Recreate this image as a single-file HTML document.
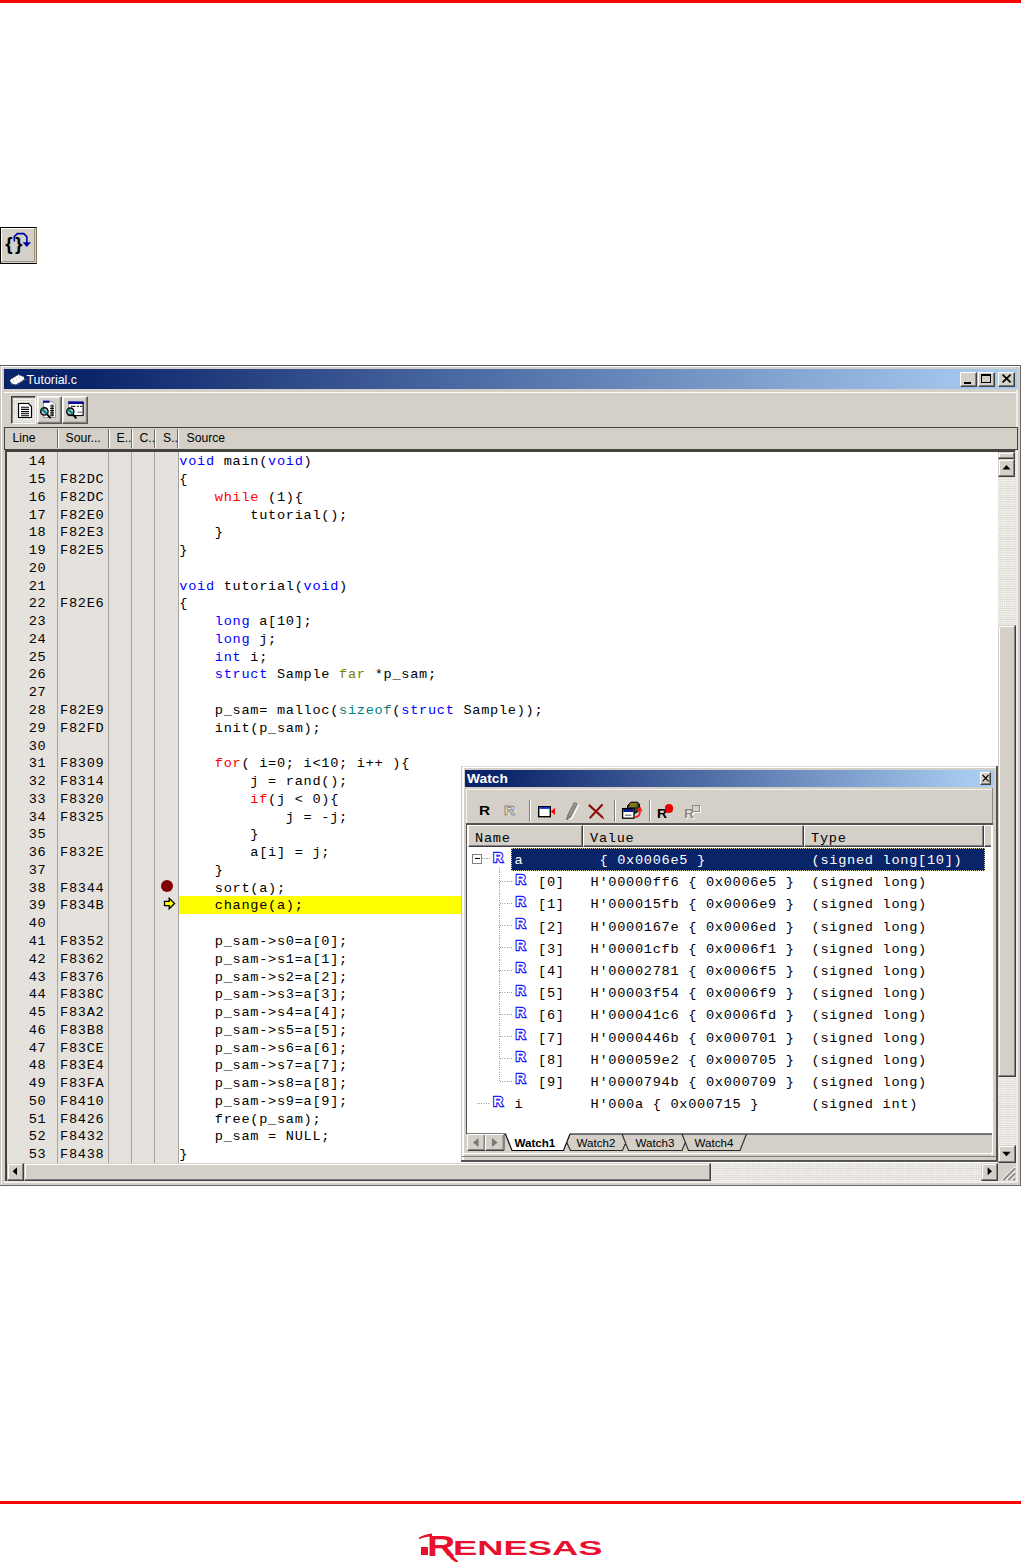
<!DOCTYPE html><html><head><meta charset="utf-8"><title>Tutorial</title><style>
*{box-sizing:border-box}
html,body{margin:0;padding:0}
body{width:1021px;height:1562px;position:relative;background:#fff;overflow:hidden;font-family:"Liberation Sans",sans-serif}
.a{position:absolute}
.mono{font-family:"Liberation Mono",monospace;font-size:13.6px;letter-spacing:0.72px;line-height:17.77px;white-space:pre;color:#000}
.ui{font-family:"Liberation Sans",sans-serif;font-size:12px;color:#000;white-space:pre}
.k{color:#0000ff} .r{color:#ff0000} .t{color:#008080} .o{color:#808000}
.raised{background:#d4d0c8;border:1px solid;border-color:#ffffff #404040 #404040 #ffffff;box-shadow:inset -1px -1px 0 #808080}
.btn{background:#d4d0c8;border:1px solid;border-color:#ffffff #404040 #404040 #ffffff;box-shadow:inset -1px -1px 0 #808080, inset 1px 1px 0 #d4d0c8}
.btn2{background:#d4d0c8;border:1.4px solid;border-color:#ffffff #5a5854 #5a5854 #ffffff;box-shadow:inset -1.2px -1.2px 0 #808080, inset 1px 1px 0 #f4f2ee}
.sbtn{background:#d4d0c8;border:1px solid;border-color:#d4d0c8 #404040 #404040 #d4d0c8;box-shadow:inset -1px -1px 0 #808080, inset 1px 1px 0 #fff}
.track{background:repeating-conic-gradient(#f8f7f5 0 25%,#dcd9d3 0 50%) 0 0/2.22px 2.22px}
</style></head><body>
<div class="a" style="left:0;top:0;width:1021px;height:3px;background:#ff0000"></div>
<div class="a" style="left:0;top:1501px;width:1021px;height:3px;background:#ff0000"></div>
<div class="a" style="left:0;top:227px;width:37px;height:37px;background:#d4d0c8;border:1px solid #000;border-right-color:#857b62;border-left-width:1px">
<div class="a" style="left:0;top:0;width:34px;height:34px;border-top:1px solid #fff;border-left:1px solid #fff;border-right:1px solid #9a927f;border-bottom:1px solid #9a927f"></div>
<svg class="a" style="left:0;top:0" width="36" height="36" viewBox="0 0 36 36">
<text x="4.3" y="22.3" font-family="Liberation Sans, sans-serif" font-weight="bold" font-size="19" fill="#000">{</text>
<text x="14.1" y="22.3" font-family="Liberation Sans, sans-serif" font-weight="bold" font-size="19" fill="#000">}</text>
<path d="M13.3 13.5 V8.6 L16.3 5.6 H22.8 L25.8 8.6 V15" fill="none" stroke="#00009c" stroke-width="1.6"/>
<path d="M21.6 14.3 H30 L25.8 19 Z" fill="#00009c"/>
</svg></div>
<div class="a" style="left:0;top:365px;width:1021px;height:821px;background:#d4d0c8"></div>
<div class="a" style="left:0;top:365px;width:1021px;height:1px;background:#5c5a56"></div>
<div class="a" style="left:0;top:366px;width:1px;height:820px;background:#c6c3bc"></div>
<div class="a" style="left:1px;top:366px;width:1019px;height:1.4px;background:#fff"></div>
<div class="a" style="left:1px;top:366px;width:1.2px;height:819px;background:#fff"></div>
<div class="a" style="left:4px;top:1181px;width:1014px;height:2.4px;background:#efede9"></div>
<div class="a" style="left:1015.5px;top:390px;width:2.5px;height:793.4px;background:#efede9"></div>
<div class="a" style="left:0;top:1185.3px;width:1021px;height:1px;background:#6a6864"></div>
<div class="a" style="left:1020px;top:365px;width:1px;height:821.3px;background:#6e6c68"></div>
<div class="a" style="left:4px;top:369px;width:1013px;height:20px;background:linear-gradient(90deg,#0a246a 0%,#0a246a 8%,#a6caf0 97%)"></div>
<svg class="a" style="left:7.5px;top:373.3px" width="21" height="13.5" viewBox="0 0 18 13" preserveAspectRatio="none">
<path d="M1.5 6.5 L9 1.5 L13.5 3.5 L14 6 L7 11 L3 10 Z" fill="#fff"/>
<path d="M2 7 L3.2 9.8 M4.5 6 L5.5 9 M7 5 L8 7.5 M9.5 3.5 L10.5 6" stroke="#c8c8c8" stroke-width="0.8"/>
<path d="M1.5 6.5 L9 1.5 L13.5 3.5" fill="none" stroke="#1a1a4a" stroke-width="0.8" stroke-dasharray="1.2 1.2"/>
<path d="M3 10.5 L7 11.5 L14.5 6.2 L16 6.5" fill="none" stroke="#7a7a8a" stroke-width="0.9" stroke-dasharray="1.4 1"/>
</svg>
<div class="a ui" style="left:26.5px;top:372.9px;color:#fff;font-size:12.4px;line-height:15px">Tutorial.c</div>
<div class="a btn" style="left:960px;top:371.5px;width:16.6px;height:15.3px"></div>
<div class="a" style="left:964.2px;top:381.5px;width:7px;height:2.2px;background:#000"></div>
<div class="a btn" style="left:977.7px;top:371.5px;width:17.3px;height:15.3px"></div>
<div class="a" style="left:981px;top:373.8px;width:10px;height:9.5px;border:1px solid #000;border-top-width:2.2px"></div>
<div class="a btn" style="left:997.5px;top:371.5px;width:17.6px;height:15.3px"></div>
<svg class="a" style="left:997.7px;top:371.3px" width="18" height="16" viewBox="0 0 18 16"><path d="M4.6 3.6 L12.6 11.4 M12.6 3.6 L4.6 11.4" stroke="#000" stroke-width="1.7" fill="none"/></svg>
<div class="a" style="left:4px;top:392px;width:1013px;height:1px;background:#fff"></div>
<div class="a" style="left:11px;top:396px;width:25px;height:28px;background:repeating-conic-gradient(#ffffff 0 25%,#d4d0c8 0 50%) 0 0/2.22px 2.22px;border:1.3px solid;border-color:#404040 #fff #fff #404040;box-shadow:inset 1px 1px 0 #808080"></div>
<svg class="a" style="left:16px;top:401px" width="18" height="19" viewBox="0 0 18 19">
<path d="M2.5 2.5 H12.5 L15.5 5.5 V16.5 H2.5 Z" fill="#fff" stroke="#000" stroke-width="1.2"/>
<path d="M5 6.2 H13 M5 8.4 H13 M5 10.6 H13 M5 12.8 H13 M5 14.7 H13" stroke="#000" stroke-width="1.1"/>
</svg>
<div class="a btn2" style="left:36.5px;top:396px;width:25px;height:28px"></div>
<svg class="a" style="left:38px;top:399px" width="22" height="22" viewBox="0 0 22 22">
<path d="M5.5 2.5 H14 L17.5 5.5 V18.5 H5.5 Z" fill="#fff" stroke="#8a8a8a" stroke-width="0.9"/>
<rect x="5" y="1.6" width="6.5" height="2.2" fill="#0a0a9a"/>
<path d="M12 7 H16 M12 9.3 H16 M12 11.6 H16 M12 13.9 H16 M12 16.2 H16" stroke="#222" stroke-width="1.2"/>
<rect x="13.2" y="5.5" width="2.2" height="12" fill="#000" opacity="0.55"/>
<circle cx="6.4" cy="12.4" r="3.7" fill="#bdbdbd" stroke="#000" stroke-width="1.4"/>
<path d="M4.6 10.6 L8.2 14.2" stroke="#008a90" stroke-width="2.2" stroke-linecap="round"/>
<path d="M9.2 15.4 L12.6 19.2" stroke="#000" stroke-width="2"/>
</svg>
<div class="a btn2" style="left:62px;top:396px;width:25.5px;height:28px"></div>
<svg class="a" style="left:63.5px;top:399px" width="22" height="22" viewBox="0 0 22 22">
<rect x="4.5" y="3" width="14.5" height="13.5" fill="#fff" stroke="#8a8a8a" stroke-width="0.9"/>
<rect x="4.2" y="2.4" width="15.2" height="2.6" fill="#0a0a9a"/>
<path d="M7 7.3 H11.5 M13 7.3 H15 M16 7.3 H18" stroke="#333" stroke-width="1.2"/>
<path d="M13.5 13.2 H18" stroke="#999" stroke-width="1.6"/>
<path d="M4.5 16.6 H19.2 V3" stroke="#000" stroke-width="1" fill="none"/>
<circle cx="6.3" cy="12.6" r="3.6" fill="#bdbdbd" stroke="#000" stroke-width="1.4"/>
<path d="M4.5 10.8 L8.1 14.4" stroke="#008a90" stroke-width="2.2" stroke-linecap="round"/>
<path d="M9 15.5 L12.4 19.3" stroke="#000" stroke-width="2"/>
</svg>
<div class="a" style="left:4px;top:427px;width:1013.8px;height:22.5px;background:#d4d0c8;border:1.5px solid #45433f"></div>
<div class="a" style="left:56.5px;top:428.5px;width:1px;height:19.5px;background:#6e6c68"></div>
<div class="a" style="left:57.5px;top:428.5px;width:1px;height:19.5px;background:#fff"></div>
<div class="a" style="left:107.5px;top:428.5px;width:1px;height:19.5px;background:#6e6c68"></div>
<div class="a" style="left:108.5px;top:428.5px;width:1px;height:19.5px;background:#fff"></div>
<div class="a" style="left:131px;top:428.5px;width:1px;height:19.5px;background:#6e6c68"></div>
<div class="a" style="left:132px;top:428.5px;width:1px;height:19.5px;background:#fff"></div>
<div class="a" style="left:154px;top:428.5px;width:1px;height:19.5px;background:#6e6c68"></div>
<div class="a" style="left:155px;top:428.5px;width:1px;height:19.5px;background:#fff"></div>
<div class="a" style="left:177px;top:428.5px;width:1px;height:19.5px;background:#6e6c68"></div>
<div class="a" style="left:178px;top:428.5px;width:1px;height:19.5px;background:#fff"></div>
<div class="a ui" style="left:12.5px;top:431.3px;line-height:15px;font-size:12.2px">Line</div>
<div class="a ui" style="left:65.5px;top:431.3px;line-height:15px;font-size:12.2px">Sour...</div>
<div class="a ui" style="left:116.5px;top:431.3px;line-height:15px;font-size:12.2px">E..</div>
<div class="a ui" style="left:139.5px;top:431.3px;line-height:15px;font-size:12.2px">C..</div>
<div class="a ui" style="left:163px;top:431.3px;line-height:15px;font-size:12.2px">S..</div>
<div class="a ui" style="left:186.5px;top:431.3px;line-height:15px;font-size:12.2px">Source</div>
<div class="a" style="left:5.4px;top:448.6px;width:1010.1px;height:732px;background:#45433f"></div>
<div class="a" style="left:7px;top:452px;width:1008.5px;height:729px;background:#fff"></div>
<div class="a" style="left:7px;top:452px;width:171px;height:711px;background:#e5e2de"></div>
<div class="a" style="left:56.8px;top:452px;width:1.2px;height:711px;background:#a6a4a0"></div>
<div class="a" style="left:107.8px;top:452px;width:1.2px;height:711px;background:#a6a4a0"></div>
<div class="a" style="left:131px;top:452px;width:1.2px;height:711px;background:#a6a4a0"></div>
<div class="a" style="left:154.2px;top:452px;width:1.2px;height:711px;background:#a6a4a0"></div>
<div class="a" style="left:177.7px;top:452px;width:1.2px;height:711px;background:#a6a4a0"></div>
<div class="a" style="left:179px;top:895.95px;width:300px;height:17.7px;background:#ffff00"></div>
<div class="a mono" style="left:7px;top:453.20px;width:39.5px;text-align:right">14</div>
<div class="a mono" style="left:179.3px;top:453.20px"><span class="k">void</span> main(<span class="k">void</span>)</div>
<div class="a mono" style="left:7px;top:470.97px;width:39.5px;text-align:right">15</div>
<div class="a mono" style="left:60px;top:470.97px">F82DC</div>
<div class="a mono" style="left:179.3px;top:470.97px">{</div>
<div class="a mono" style="left:7px;top:488.74px;width:39.5px;text-align:right">16</div>
<div class="a mono" style="left:60px;top:488.74px">F82DC</div>
<div class="a mono" style="left:179.3px;top:488.74px">    <span class="r">while</span> (1){</div>
<div class="a mono" style="left:7px;top:506.51px;width:39.5px;text-align:right">17</div>
<div class="a mono" style="left:60px;top:506.51px">F82E0</div>
<div class="a mono" style="left:179.3px;top:506.51px">        tutorial();</div>
<div class="a mono" style="left:7px;top:524.28px;width:39.5px;text-align:right">18</div>
<div class="a mono" style="left:60px;top:524.28px">F82E3</div>
<div class="a mono" style="left:179.3px;top:524.28px">    }</div>
<div class="a mono" style="left:7px;top:542.05px;width:39.5px;text-align:right">19</div>
<div class="a mono" style="left:60px;top:542.05px">F82E5</div>
<div class="a mono" style="left:179.3px;top:542.05px">}</div>
<div class="a mono" style="left:7px;top:559.82px;width:39.5px;text-align:right">20</div>
<div class="a mono" style="left:7px;top:577.59px;width:39.5px;text-align:right">21</div>
<div class="a mono" style="left:179.3px;top:577.59px"><span class="k">void</span> tutorial(<span class="k">void</span>)</div>
<div class="a mono" style="left:7px;top:595.36px;width:39.5px;text-align:right">22</div>
<div class="a mono" style="left:60px;top:595.36px">F82E6</div>
<div class="a mono" style="left:179.3px;top:595.36px">{</div>
<div class="a mono" style="left:7px;top:613.13px;width:39.5px;text-align:right">23</div>
<div class="a mono" style="left:179.3px;top:613.13px">    <span class="k">long</span> a[10];</div>
<div class="a mono" style="left:7px;top:630.90px;width:39.5px;text-align:right">24</div>
<div class="a mono" style="left:179.3px;top:630.90px">    <span class="k">long</span> j;</div>
<div class="a mono" style="left:7px;top:648.67px;width:39.5px;text-align:right">25</div>
<div class="a mono" style="left:179.3px;top:648.67px">    <span class="k">int</span> i;</div>
<div class="a mono" style="left:7px;top:666.44px;width:39.5px;text-align:right">26</div>
<div class="a mono" style="left:179.3px;top:666.44px">    <span class="k">struct</span> Sample <span class="o">far</span> *p_sam;</div>
<div class="a mono" style="left:7px;top:684.21px;width:39.5px;text-align:right">27</div>
<div class="a mono" style="left:7px;top:701.98px;width:39.5px;text-align:right">28</div>
<div class="a mono" style="left:60px;top:701.98px">F82E9</div>
<div class="a mono" style="left:179.3px;top:701.98px">    p_sam= malloc(<span class="t">sizeof</span>(<span class="k">struct</span> Sample));</div>
<div class="a mono" style="left:7px;top:719.75px;width:39.5px;text-align:right">29</div>
<div class="a mono" style="left:60px;top:719.75px">F82FD</div>
<div class="a mono" style="left:179.3px;top:719.75px">    init(p_sam);</div>
<div class="a mono" style="left:7px;top:737.52px;width:39.5px;text-align:right">30</div>
<div class="a mono" style="left:7px;top:755.29px;width:39.5px;text-align:right">31</div>
<div class="a mono" style="left:60px;top:755.29px">F8309</div>
<div class="a mono" style="left:179.3px;top:755.29px">    <span class="r">for</span>( i=0; i&lt;10; i++ ){</div>
<div class="a mono" style="left:7px;top:773.06px;width:39.5px;text-align:right">32</div>
<div class="a mono" style="left:60px;top:773.06px">F8314</div>
<div class="a mono" style="left:179.3px;top:773.06px">        j = rand();</div>
<div class="a mono" style="left:7px;top:790.83px;width:39.5px;text-align:right">33</div>
<div class="a mono" style="left:60px;top:790.83px">F8320</div>
<div class="a mono" style="left:179.3px;top:790.83px">        <span class="r">if</span>(j &lt; 0){</div>
<div class="a mono" style="left:7px;top:808.60px;width:39.5px;text-align:right">34</div>
<div class="a mono" style="left:60px;top:808.60px">F8325</div>
<div class="a mono" style="left:179.3px;top:808.60px">            j = -j;</div>
<div class="a mono" style="left:7px;top:826.37px;width:39.5px;text-align:right">35</div>
<div class="a mono" style="left:179.3px;top:826.37px">        }</div>
<div class="a mono" style="left:7px;top:844.14px;width:39.5px;text-align:right">36</div>
<div class="a mono" style="left:60px;top:844.14px">F832E</div>
<div class="a mono" style="left:179.3px;top:844.14px">        a[i] = j;</div>
<div class="a mono" style="left:7px;top:861.91px;width:39.5px;text-align:right">37</div>
<div class="a mono" style="left:179.3px;top:861.91px">    }</div>
<div class="a mono" style="left:7px;top:879.68px;width:39.5px;text-align:right">38</div>
<div class="a mono" style="left:60px;top:879.68px">F8344</div>
<div class="a mono" style="left:179.3px;top:879.68px">    sort(a);</div>
<div class="a mono" style="left:7px;top:897.45px;width:39.5px;text-align:right">39</div>
<div class="a mono" style="left:60px;top:897.45px">F834B</div>
<div class="a mono" style="left:179.3px;top:897.45px">    change(a);</div>
<div class="a mono" style="left:7px;top:915.22px;width:39.5px;text-align:right">40</div>
<div class="a mono" style="left:7px;top:932.99px;width:39.5px;text-align:right">41</div>
<div class="a mono" style="left:60px;top:932.99px">F8352</div>
<div class="a mono" style="left:179.3px;top:932.99px">    p_sam-&gt;s0=a[0];</div>
<div class="a mono" style="left:7px;top:950.76px;width:39.5px;text-align:right">42</div>
<div class="a mono" style="left:60px;top:950.76px">F8362</div>
<div class="a mono" style="left:179.3px;top:950.76px">    p_sam-&gt;s1=a[1];</div>
<div class="a mono" style="left:7px;top:968.53px;width:39.5px;text-align:right">43</div>
<div class="a mono" style="left:60px;top:968.53px">F8376</div>
<div class="a mono" style="left:179.3px;top:968.53px">    p_sam-&gt;s2=a[2];</div>
<div class="a mono" style="left:7px;top:986.30px;width:39.5px;text-align:right">44</div>
<div class="a mono" style="left:60px;top:986.30px">F838C</div>
<div class="a mono" style="left:179.3px;top:986.30px">    p_sam-&gt;s3=a[3];</div>
<div class="a mono" style="left:7px;top:1004.07px;width:39.5px;text-align:right">45</div>
<div class="a mono" style="left:60px;top:1004.07px">F83A2</div>
<div class="a mono" style="left:179.3px;top:1004.07px">    p_sam-&gt;s4=a[4];</div>
<div class="a mono" style="left:7px;top:1021.84px;width:39.5px;text-align:right">46</div>
<div class="a mono" style="left:60px;top:1021.84px">F83B8</div>
<div class="a mono" style="left:179.3px;top:1021.84px">    p_sam-&gt;s5=a[5];</div>
<div class="a mono" style="left:7px;top:1039.61px;width:39.5px;text-align:right">47</div>
<div class="a mono" style="left:60px;top:1039.61px">F83CE</div>
<div class="a mono" style="left:179.3px;top:1039.61px">    p_sam-&gt;s6=a[6];</div>
<div class="a mono" style="left:7px;top:1057.38px;width:39.5px;text-align:right">48</div>
<div class="a mono" style="left:60px;top:1057.38px">F83E4</div>
<div class="a mono" style="left:179.3px;top:1057.38px">    p_sam-&gt;s7=a[7];</div>
<div class="a mono" style="left:7px;top:1075.15px;width:39.5px;text-align:right">49</div>
<div class="a mono" style="left:60px;top:1075.15px">F83FA</div>
<div class="a mono" style="left:179.3px;top:1075.15px">    p_sam-&gt;s8=a[8];</div>
<div class="a mono" style="left:7px;top:1092.92px;width:39.5px;text-align:right">50</div>
<div class="a mono" style="left:60px;top:1092.92px">F8410</div>
<div class="a mono" style="left:179.3px;top:1092.92px">    p_sam-&gt;s9=a[9];</div>
<div class="a mono" style="left:7px;top:1110.69px;width:39.5px;text-align:right">51</div>
<div class="a mono" style="left:60px;top:1110.69px">F8426</div>
<div class="a mono" style="left:179.3px;top:1110.69px">    free(p_sam);</div>
<div class="a mono" style="left:7px;top:1128.46px;width:39.5px;text-align:right">52</div>
<div class="a mono" style="left:60px;top:1128.46px">F8432</div>
<div class="a mono" style="left:179.3px;top:1128.46px">    p_sam = NULL;</div>
<div class="a mono" style="left:7px;top:1146.23px;width:39.5px;text-align:right">53</div>
<div class="a mono" style="left:60px;top:1146.23px">F8438</div>
<div class="a mono" style="left:179.3px;top:1146.23px">}</div>
<div class="a" style="left:161px;top:880.18px;width:12.2px;height:12.2px;border-radius:50%;background:#800000"></div>
<svg class="a" style="left:161.7px;top:896.05px" width="15" height="15" viewBox="0 0 15 15"><path d="M2.5 5.3 H7.2 V2.2 L12.6 7.5 L7.2 12.8 V9.7 H2.5 Z" fill="#ffff00" stroke="#000" stroke-width="1.3" stroke-linejoin="miter"/></svg>
<div class="a track" style="left:997.5px;top:452px;width:18px;height:711px"></div>
<div class="a sbtn" style="left:997.5px;top:452px;width:17.7px;height:7.4px"></div>
<div class="a sbtn" style="left:997.5px;top:459.2px;width:17.7px;height:17.8px"></div>
<svg class="a" style="left:998px;top:458px" width="18" height="18" viewBox="0 0 18 18"><path d="M4.5 11.5 L8.5 7 L12.5 11.5 Z" fill="#000"/></svg>
<div class="a sbtn" style="left:997.5px;top:624.5px;width:18px;height:452px"></div>
<div class="a sbtn" style="left:997.5px;top:1145px;width:18px;height:18px"></div>
<svg class="a" style="left:998px;top:1145px" width="18" height="18" viewBox="0 0 18 18"><path d="M4.3 6.8 L12.7 6.8 L8.5 11.3 Z" fill="#000"/></svg>
<div class="a track" style="left:7px;top:1163px;width:991px;height:17.5px"></div>
<div class="a sbtn" style="left:7px;top:1163px;width:17px;height:17.5px"></div>
<svg class="a" style="left:7px;top:1163px" width="17" height="17" viewBox="0 0 17 17"><path d="M10 4.3 L10 12.3 L5.6 8.3 Z" fill="#000"/></svg>
<div class="a sbtn" style="left:24px;top:1163px;width:687px;height:17.5px"></div>
<div class="a sbtn" style="left:980.5px;top:1163px;width:17.5px;height:17.5px"></div>
<svg class="a" style="left:980.5px;top:1163px" width="17" height="17" viewBox="0 0 17 17"><path d="M6.6 4.3 L6.6 12.3 L11 8.3 Z" fill="#000"/></svg>
<div class="a" style="left:998px;top:1163px;width:18px;height:17.5px;background:#d4d0c8"></div>
<svg class="a" style="left:998px;top:1163px" width="18" height="18" viewBox="0 0 18 18">
<path d="M4 17 L17 4 M9 17 L17 9 M14 17 L17 14" stroke="#fff" stroke-width="1.2"/>
<path d="M5.2 17 L17 5.2 M10.2 17 L17 10.2 M15.2 17 L17 15.2" stroke="#808080" stroke-width="1.6"/>
</svg>
<div class="a" style="left:461px;top:766px;width:536.5px;height:396px;background:#d4d0c8"></div>
<div class="a" style="left:461px;top:766px;width:536.5px;height:1px;background:#e0ddd8"></div>
<div class="a" style="left:461px;top:766px;width:1px;height:396px;background:#c8c5be"></div>
<div class="a" style="left:462px;top:767px;width:533.5px;height:1px;background:#fff"></div>
<div class="a" style="left:462px;top:767px;width:1.5px;height:393px;background:#fff"></div>
<div class="a" style="left:461px;top:1160px;width:536.5px;height:2px;background:#55534f"></div>
<div class="a" style="left:995.5px;top:766px;width:2px;height:396px;background:#55534f"></div>
<div class="a" style="left:462px;top:1156px;width:533.5px;height:1.2px;background:#808080"></div>
<div class="a" style="left:465px;top:770.2px;width:528.6px;height:16.9px;background:linear-gradient(90deg,#0a246a 0%,#0a246a 6%,#a6caf0 95%)"></div>
<div class="a ui" style="left:467px;top:772.3px;color:#fff;font-weight:bold;font-size:12.2px;line-height:15px;transform-origin:0 0;transform:scaleX(1.13)">Watch</div>
<div class="a" style="left:979.8px;top:772.4px;width:11.4px;height:12.6px;background:#d4d0c8;border:1px solid;border-color:#fff #404040 #404040 #fff;box-shadow:inset -1px -1px 0 #808080"></div>
<svg class="a" style="left:979.8px;top:772.4px" width="12" height="13" viewBox="0 0 12 13"><path d="M2.6 3 L8.6 9.4 M8.6 3 L2.6 9.4" stroke="#000" stroke-width="1.1" fill="none"/></svg>
<div class="a" style="left:991.3px;top:825px;width:2.2px;height:330px;background:#fff"></div>
<div class="a" style="left:463px;top:1152.6px;width:530px;height:1.8px;background:#fff"></div>
<div class="a" style="left:466px;top:788.5px;width:526px;height:1px;background:#f4f2ee"></div>
<div class="a" style="left:466px;top:788.5px;width:1px;height:35px;background:#f4f2ee"></div>
<div class="a" style="left:991.6px;top:788px;width:1.2px;height:36px;background:#8a8884"></div>
<div class="a" style="left:528.5px;top:799.5px;width:1px;height:22.5px;background:#808080"></div>
<div class="a" style="left:529.5px;top:799.5px;width:1px;height:22.5px;background:#fff"></div>
<div class="a" style="left:613.5px;top:799.5px;width:1px;height:22.5px;background:#808080"></div>
<div class="a" style="left:614.5px;top:799.5px;width:1px;height:22.5px;background:#fff"></div>
<div class="a" style="left:648.5px;top:799.5px;width:1px;height:22.5px;background:#808080"></div>
<div class="a" style="left:649.5px;top:799.5px;width:1px;height:22.5px;background:#fff"></div>
<div class="a" style="left:479px;top:802.5px;font:bold 13.6px/16px 'Liberation Sans',sans-serif;color:#000;transform-origin:0 0;transform:scaleX(1.13)">R</div>
<div class="a" style="left:505px;top:803.5px;font:bold 13.6px/16px 'Liberation Sans',sans-serif;color:#fff;transform-origin:0 0;transform:scaleX(1.13)">R</div>
<div class="a" style="left:504px;top:802.5px;font:bold 13.6px/16px 'Liberation Sans',sans-serif;color:transparent;-webkit-text-stroke:0.9px #8c8a86;transform-origin:0 0;transform:scaleX(1.13)">R</div>
<svg class="a" style="left:536px;top:800px" width="22" height="22" viewBox="0 0 22 22">
<rect x="2.7" y="6.7" width="11.6" height="10" fill="#fff" stroke="#000" stroke-width="1.4"/>
<rect x="3.4" y="7" width="10.2" height="1.9" fill="#1030d0"/>
<path d="M19 7.8 V15 L14.8 11.4 Z" fill="#ff0000"/></svg>
<svg class="a" style="left:564px;top:800px" width="16" height="22" viewBox="0 0 16 22">
<path d="M5.6 19.4 L8.2 17.8 L15 4.6" stroke="#fff" stroke-width="1.2" fill="none"/>
<path d="M10 2 L13.8 3.6 L6.8 17.4 L2.4 20 L3 15.4 Z" fill="#807e7a"/>
<path d="M11 3.6 L12 4 L6 15.8 L5 15.4 Z" fill="#a8a6a1"/>
<path d="M2.4 20 L2.7 17.6 L4.4 18.8 Z" fill="#5a5854"/>
</svg>
<svg class="a" style="left:586px;top:800px" width="20" height="22" viewBox="0 0 20 22">
<path d="M3.4 5.4 L16.4 17.2 M16 5 L4.2 17.6" stroke="#8c0a0a" stroke-width="2.1" fill="none" stroke-linecap="round"/>
<circle cx="17.4" cy="18.6" r="0.7" fill="#8c0a0a"/></svg>
<svg class="a" style="left:620px;top:799px" width="24" height="22" viewBox="0 0 24 22">
<path d="M7.5 6.5 L11 3.2 L17.5 3.2 L19.5 5.2 L19.5 11 L16 14 L7.5 14 Z" fill="#3a3a2a" stroke="#000" stroke-width="1"/>
<path d="M10 5 H17 M9.4 7 H16.6" stroke="#c8b400" stroke-width="1.2"/>
<rect x="2.6" y="9.6" width="11.4" height="9.6" fill="#fff" stroke="#000" stroke-width="1.3"/>
<rect x="3.3" y="10" width="10" height="3" fill="#0a1a8a"/>
<path d="M5 16.2 H11.4" stroke="#666" stroke-width="1.1"/>
<path d="M14.6 18.2 C19 18.4 20.6 14.6 19.6 10.6" stroke="#ff1a1a" stroke-width="1.7" fill="none"/>
<path d="M16.6 11.6 L20.4 7.4 L22.4 12.6 Z" fill="#ff1a1a"/>
</svg>
<div class="a" style="left:657px;top:805.5px;font:bold 13.4px/16px 'Liberation Sans',sans-serif;color:#000;transform-origin:0 0;transform:scaleX(1.05)">R</div>
<div class="a" style="left:664.5px;top:804px;width:8.6px;height:8.6px;border-radius:50%;background:#ee0000"></div>
<div class="a" style="left:684.5px;top:806.5px;font:bold 13.4px/16px 'Liberation Sans',sans-serif;color:#fff;transform-origin:0 0;transform:scaleX(1.05)">R</div>
<div class="a" style="left:683.5px;top:805.5px;font:bold 13.4px/16px 'Liberation Sans',sans-serif;color:#8c8a86;transform-origin:0 0;transform:scaleX(1.05)">R</div>
<div class="a" style="left:691.5px;top:804.5px;width:8px;height:7.5px;background:#d4d0c8;border:1px solid #8c8a86;box-shadow:1px 1px 0 #fff"></div>
<div class="a" style="left:466px;top:823.3px;width:526.5px;height:310.7px;background:#55534f"></div>
<div class="a" style="left:467.3px;top:824.9px;width:524.2px;height:309.1px;background:#fff"></div>
<div class="a" style="left:467.5px;top:824.9px;width:115px;height:22.6px;background:#d4d0c8;border:1px solid;border-color:#fff #404040 #404040 #fff;box-shadow:inset -1px -1px 0 #808080"></div>
<div class="a mono" style="left:475.0px;top:830.2px">Name</div>
<div class="a" style="left:582.5px;top:824.9px;width:221px;height:22.6px;background:#d4d0c8;border:1px solid;border-color:#fff #404040 #404040 #fff;box-shadow:inset -1px -1px 0 #808080"></div>
<div class="a mono" style="left:590.0px;top:830.2px">Value</div>
<div class="a" style="left:803.5px;top:824.9px;width:180.5px;height:22.6px;background:#d4d0c8;border:1px solid;border-color:#fff #404040 #404040 #fff;box-shadow:inset -1px -1px 0 #808080"></div>
<div class="a mono" style="left:811.0px;top:830.2px">Type</div>
<div class="a" style="left:984px;top:824.9px;width:8.8px;height:22.6px;background:#d4d0c8;border:1px solid;border-color:#fff #404040 #404040 #fff;box-shadow:inset -1px -1px 0 #808080"></div>
<div class="a" style="left:991.3px;top:824.5px;width:2.2px;height:330px;background:#fff"></div>
<div class="a" style="left:993.5px;top:824.5px;width:2px;height:24px;background:#d4d0c8"></div>
<div class="a" style="left:511px;top:848px;width:474px;height:22.6px;background:#0a246a;outline:1px dotted #d8c890;outline-offset:-1px"></div>
<div class="a" style="left:498.8px;top:867px;width:1px;height:214.5px;background:repeating-linear-gradient(180deg,#a0a0a0 0 1.1px,transparent 1.1px 2.2px)"></div>
<div class="a" style="left:482.2px;top:858.2px;width:8px;height:1px;background:repeating-linear-gradient(90deg,#a0a0a0 0 1.1px,transparent 1.1px 2.2px)"></div>
<div class="a" style="left:472px;top:853.7px;width:10.2px;height:10.2px;background:#fff;border:1px solid #808080"></div>
<div class="a" style="left:474.5px;top:858.2px;width:5.2px;height:1.3px;background:#000"></div>
<div class="a" style="left:493.2px;top:850.1px;font:bold 13.3px/16px 'Liberation Sans',sans-serif;color:#fff;-webkit-text-stroke:2.3px #1c1cfa;paint-order:stroke fill;transform-origin:0 0;transform:scaleX(1.0)">R</div>
<div class="a mono" style="left:514.5px;top:852.0px;color:#fff">a</div>
<div class="a mono" style="left:590.5px;top:852.0px;color:#fff"> { 0x0006e5 }</div>
<div class="a mono" style="left:811.5px;top:852.0px;color:#fff">(signed long[10])</div>
<div class="a" style="left:500px;top:880.8px;width:11.5px;height:1px;background:repeating-linear-gradient(90deg,#a0a0a0 0 1.1px,transparent 1.1px 2.2px)"></div>
<div class="a" style="left:515.7px;top:871.5px;font:bold 13.3px/16px 'Liberation Sans',sans-serif;color:#fff;-webkit-text-stroke:2.3px #1c1cfa;paint-order:stroke fill;transform-origin:0 0;transform:scaleX(1.0)">R</div>
<div class="a mono" style="left:538px;top:874.2px">[0]</div>
<div class="a mono" style="left:590.5px;top:874.2px">H'00000ff6 { 0x0006e5 }</div>
<div class="a mono" style="left:811.5px;top:874.2px">(signed long)</div>
<div class="a" style="left:500px;top:903.0px;width:11.5px;height:1px;background:repeating-linear-gradient(90deg,#a0a0a0 0 1.1px,transparent 1.1px 2.2px)"></div>
<div class="a" style="left:515.7px;top:893.7px;font:bold 13.3px/16px 'Liberation Sans',sans-serif;color:#fff;-webkit-text-stroke:2.3px #1c1cfa;paint-order:stroke fill;transform-origin:0 0;transform:scaleX(1.0)">R</div>
<div class="a mono" style="left:538px;top:896.4px">[1]</div>
<div class="a mono" style="left:590.5px;top:896.4px">H'000015fb { 0x0006e9 }</div>
<div class="a mono" style="left:811.5px;top:896.4px">(signed long)</div>
<div class="a" style="left:500px;top:925.2px;width:11.5px;height:1px;background:repeating-linear-gradient(90deg,#a0a0a0 0 1.1px,transparent 1.1px 2.2px)"></div>
<div class="a" style="left:515.7px;top:915.9px;font:bold 13.3px/16px 'Liberation Sans',sans-serif;color:#fff;-webkit-text-stroke:2.3px #1c1cfa;paint-order:stroke fill;transform-origin:0 0;transform:scaleX(1.0)">R</div>
<div class="a mono" style="left:538px;top:918.6px">[2]</div>
<div class="a mono" style="left:590.5px;top:918.6px">H'0000167e { 0x0006ed }</div>
<div class="a mono" style="left:811.5px;top:918.6px">(signed long)</div>
<div class="a" style="left:500px;top:947.4px;width:11.5px;height:1px;background:repeating-linear-gradient(90deg,#a0a0a0 0 1.1px,transparent 1.1px 2.2px)"></div>
<div class="a" style="left:515.7px;top:938.1px;font:bold 13.3px/16px 'Liberation Sans',sans-serif;color:#fff;-webkit-text-stroke:2.3px #1c1cfa;paint-order:stroke fill;transform-origin:0 0;transform:scaleX(1.0)">R</div>
<div class="a mono" style="left:538px;top:940.8px">[3]</div>
<div class="a mono" style="left:590.5px;top:940.8px">H'00001cfb { 0x0006f1 }</div>
<div class="a mono" style="left:811.5px;top:940.8px">(signed long)</div>
<div class="a" style="left:500px;top:969.6px;width:11.5px;height:1px;background:repeating-linear-gradient(90deg,#a0a0a0 0 1.1px,transparent 1.1px 2.2px)"></div>
<div class="a" style="left:515.7px;top:960.3px;font:bold 13.3px/16px 'Liberation Sans',sans-serif;color:#fff;-webkit-text-stroke:2.3px #1c1cfa;paint-order:stroke fill;transform-origin:0 0;transform:scaleX(1.0)">R</div>
<div class="a mono" style="left:538px;top:963.0px">[4]</div>
<div class="a mono" style="left:590.5px;top:963.0px">H'00002781 { 0x0006f5 }</div>
<div class="a mono" style="left:811.5px;top:963.0px">(signed long)</div>
<div class="a" style="left:500px;top:991.8px;width:11.5px;height:1px;background:repeating-linear-gradient(90deg,#a0a0a0 0 1.1px,transparent 1.1px 2.2px)"></div>
<div class="a" style="left:515.7px;top:982.5px;font:bold 13.3px/16px 'Liberation Sans',sans-serif;color:#fff;-webkit-text-stroke:2.3px #1c1cfa;paint-order:stroke fill;transform-origin:0 0;transform:scaleX(1.0)">R</div>
<div class="a mono" style="left:538px;top:985.2px">[5]</div>
<div class="a mono" style="left:590.5px;top:985.2px">H'00003f54 { 0x0006f9 }</div>
<div class="a mono" style="left:811.5px;top:985.2px">(signed long)</div>
<div class="a" style="left:500px;top:1014.0px;width:11.5px;height:1px;background:repeating-linear-gradient(90deg,#a0a0a0 0 1.1px,transparent 1.1px 2.2px)"></div>
<div class="a" style="left:515.7px;top:1004.7px;font:bold 13.3px/16px 'Liberation Sans',sans-serif;color:#fff;-webkit-text-stroke:2.3px #1c1cfa;paint-order:stroke fill;transform-origin:0 0;transform:scaleX(1.0)">R</div>
<div class="a mono" style="left:538px;top:1007.4px">[6]</div>
<div class="a mono" style="left:590.5px;top:1007.4px">H'000041c6 { 0x0006fd }</div>
<div class="a mono" style="left:811.5px;top:1007.4px">(signed long)</div>
<div class="a" style="left:500px;top:1036.2px;width:11.5px;height:1px;background:repeating-linear-gradient(90deg,#a0a0a0 0 1.1px,transparent 1.1px 2.2px)"></div>
<div class="a" style="left:515.7px;top:1026.9px;font:bold 13.3px/16px 'Liberation Sans',sans-serif;color:#fff;-webkit-text-stroke:2.3px #1c1cfa;paint-order:stroke fill;transform-origin:0 0;transform:scaleX(1.0)">R</div>
<div class="a mono" style="left:538px;top:1029.6px">[7]</div>
<div class="a mono" style="left:590.5px;top:1029.6px">H'0000446b { 0x000701 }</div>
<div class="a mono" style="left:811.5px;top:1029.6px">(signed long)</div>
<div class="a" style="left:500px;top:1058.4px;width:11.5px;height:1px;background:repeating-linear-gradient(90deg,#a0a0a0 0 1.1px,transparent 1.1px 2.2px)"></div>
<div class="a" style="left:515.7px;top:1049.1px;font:bold 13.3px/16px 'Liberation Sans',sans-serif;color:#fff;-webkit-text-stroke:2.3px #1c1cfa;paint-order:stroke fill;transform-origin:0 0;transform:scaleX(1.0)">R</div>
<div class="a mono" style="left:538px;top:1051.8px">[8]</div>
<div class="a mono" style="left:590.5px;top:1051.8px">H'000059e2 { 0x000705 }</div>
<div class="a mono" style="left:811.5px;top:1051.8px">(signed long)</div>
<div class="a" style="left:500px;top:1080.6px;width:11.5px;height:1px;background:repeating-linear-gradient(90deg,#a0a0a0 0 1.1px,transparent 1.1px 2.2px)"></div>
<div class="a" style="left:515.7px;top:1071.3px;font:bold 13.3px/16px 'Liberation Sans',sans-serif;color:#fff;-webkit-text-stroke:2.3px #1c1cfa;paint-order:stroke fill;transform-origin:0 0;transform:scaleX(1.0)">R</div>
<div class="a mono" style="left:538px;top:1074.0px">[9]</div>
<div class="a mono" style="left:590.5px;top:1074.0px">H'0000794b { 0x000709 }</div>
<div class="a mono" style="left:811.5px;top:1074.0px">(signed long)</div>
<div class="a" style="left:477px;top:1103.2px;width:12px;height:1px;background:repeating-linear-gradient(90deg,#a0a0a0 0 1.1px,transparent 1.1px 2.2px)"></div>
<div class="a" style="left:493.2px;top:1094.3px;font:bold 13.3px/16px 'Liberation Sans',sans-serif;color:#fff;-webkit-text-stroke:2.3px #1c1cfa;paint-order:stroke fill;transform-origin:0 0;transform:scaleX(1.0)">R</div>
<div class="a mono" style="left:514.5px;top:1096.2px">i</div>
<div class="a mono" style="left:590.5px;top:1096.2px">H'000a { 0x000715 }</div>
<div class="a mono" style="left:811.5px;top:1096.2px">(signed int)</div>
<div class="a" style="left:467.5px;top:1134px;width:524px;height:17.5px;background:#d4d0c8"></div>
<svg class="a" style="left:467px;top:1133px" width="526" height="20" viewBox="0 0 526 20">
<path d="M0 1 H39" stroke="#000" stroke-width="1.2"/>
<path d="M103 1 H525" stroke="#000" stroke-width="1.2"/>
<path d="M38.5 1 L45 17.5 H96.5 L103 1 Z" fill="#fff"/>
<path d="M38.5 1 L45 17.5 H96.5 L103 1" fill="none" stroke="#000" stroke-width="1.1"/>
<path d="M99.5 9 L103.5 17.5 H155.5 L159 9 M155 1 L161.5 17.5 H215 L218.5 9 M215 1 L221.5 17.5 H273 L279.5 1" fill="none" stroke="#2a2926" stroke-width="1.1"/>
<rect x="0.5" y="1.5" width="17.5" height="16" fill="#d4d0c8"/><path d="M0.5 17.5 V1.5 H18" stroke="#fff" fill="none"/><path d="M0.5 17.5 H18 V1.5" stroke="#404040" fill="none"/><path d="M1.5 16.5 H17 V2.5" stroke="#808080" fill="none"/>
<rect x="18.5" y="1.5" width="18.5" height="16" fill="#d4d0c8"/><path d="M18.5 17.5 V1.5 H37" stroke="#fff" fill="none"/><path d="M18.5 17.5 H37 V1.5" stroke="#404040" fill="none"/><path d="M19.5 16.5 H36 V2.5" stroke="#808080" fill="none"/>
<path d="M11.5 5 V14 L6 9.5 Z" fill="#7a7874"/><path d="M25 5 V14 L30.5 9.5 Z" fill="#7a7874"/>
</svg>
<div class="a ui" style="left:514.5px;top:1135.5px;font-size:11.6px;line-height:14px;font-weight:bold">Watch1</div>
<div class="a ui" style="left:576.5px;top:1135.5px;font-size:11.6px;line-height:14px;font-weight:normal">Watch2</div>
<div class="a ui" style="left:635.5px;top:1135.5px;font-size:11.6px;line-height:14px;font-weight:normal">Watch3</div>
<div class="a ui" style="left:694.5px;top:1135.5px;font-size:11.6px;line-height:14px;font-weight:normal">Watch4</div>
<div class="a" style="left:418px;top:1530px;width:190px;height:32px;color:#e8112d;font-family:'Liberation Sans',sans-serif;font-weight:bold;white-space:pre">
<span class="a" style="left:9px;top:-2.5px;font-size:30px;line-height:36px;transform-origin:0 0;transform:scaleX(1.3)">R</span>
<span class="a" style="left:35px;top:3.5px;font-size:21px;line-height:28px;transform-origin:0 0;transform:scaleX(1.73);letter-spacing:0px">ENESAS</span>
<span class="a" style="left:2.6px;top:17px;width:7.4px;height:7.5px;background:#e8112d"></span>
<svg class="a" style="left:0;top:0" width="40" height="32" viewBox="0 0 40 32"><path d="M0.6 8 C4 5.4 9 3.6 14 3.4 L14 6.6 C9.5 6.6 5 7.4 1.2 9.2 Z" fill="#e8112d"/><path d="M30 25 C32 28 34 30 37.5 32 L40 32 L40 31 C37.5 29 36 27.5 34.5 25 Z" fill="#e8112d"/></svg>
</div>
</body></html>
